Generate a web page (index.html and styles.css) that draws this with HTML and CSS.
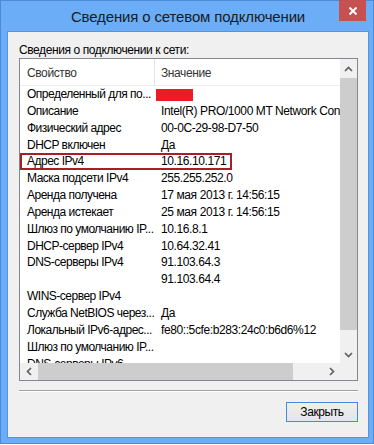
FILE: index.html
```html
<!DOCTYPE html>
<html lang="ru">
  <head>
    <meta charset="UTF-8" />
    <meta name="viewport" content="width=device-width, initial-scale=1.0" />
    <title>Сведения о сетевом подключении</title>
    <link rel="stylesheet" href="styles.css">
  </head>
  <body>
    <div class="window">
      <div class="titlebar">
        <span class="title">Сведения о сетевом подключении</span>
        <button class="close" aria-label="Закрыть">
          <svg width="10" height="8" viewBox="0 0 10 8"><path d="M1.5 0.5 L8.5 7.5 M8.5 0.5 L1.5 7.5" stroke="#fff" stroke-width="2" fill="none"/></svg>
        </button>
      </div>

      <div class="client">
        <div class="label">Сведения о подключении к сети:</div>

        <div class="listbox">
          <div class="view">
            <div class="header">
              <div class="hcol name">Свойство</div>
              <div class="hcol value">Значение</div>
            </div>
            <div class="row"><div class="name">Определенный для по...</div><div class="value"><span class="redact"></span></div></div>
            <div class="row"><div class="name">Описание</div><div class="value">Intel(R) PRO/1000 MT Network Connection</div></div>
            <div class="row"><div class="name">Физический адрес</div><div class="value">00-0C-29-98-D7-50</div></div>
            <div class="row"><div class="name">DHCP включен</div><div class="value">Да</div></div>
            <div class="row mark"><div class="name">Адрес IPv4</div><div class="value">10.16.10.171</div></div>
            <div class="row"><div class="name">Маска подсети IPv4</div><div class="value">255.255.252.0</div></div>
            <div class="row"><div class="name">Аренда получена</div><div class="value">17 мая 2013 г. 14:56:15</div></div>
            <div class="row"><div class="name">Аренда истекает</div><div class="value">25 мая 2013 г. 14:56:15</div></div>
            <div class="row"><div class="name">Шлюз по умолчанию IP...</div><div class="value">10.16.8.1</div></div>
            <div class="row"><div class="name">DHCP-сервер IPv4</div><div class="value">10.64.32.41</div></div>
            <div class="row"><div class="name">DNS-серверы IPv4</div><div class="value">91.103.64.3</div></div>
            <div class="row"><div class="name"></div><div class="value">91.103.64.4</div></div>
            <div class="row"><div class="name">WINS-сервер IPv4</div><div class="value"></div></div>
            <div class="row"><div class="name">Служба NetBIOS через...</div><div class="value">Да</div></div>
            <div class="row"><div class="name">Локальный IPv6-адрес...</div><div class="value">fe80::5cfe:b283:24c0:b6d6%12</div></div>
            <div class="row"><div class="name">Шлюз по умолчанию IP...</div><div class="value"></div></div>
            <div class="row"><div class="name">DNS-серверы IPv6</div><div class="value"></div></div>
          </div>

          <div class="vscroll">
            <div class="arrow up">
              <svg width="9" height="6" viewBox="0 0 9 6"><polyline points="1,5 4.5,1.5 8,5" stroke="#606060" stroke-width="1.7" fill="none"/></svg>
            </div>
            <div class="vthumb"></div>
            <div class="track"></div>
            <div class="arrow">
              <svg width="9" height="6" viewBox="0 0 9 6"><polyline points="1,1 4.5,4.5 8,1" stroke="#606060" stroke-width="1.7" fill="none"/></svg>
            </div>
          </div>

          <div class="hscroll">
            <div class="arrow">
              <svg width="6" height="9" viewBox="0 0 6 9"><polyline points="5,1 1.5,4.5 5,8" stroke="#606060" stroke-width="1.7" fill="none"/></svg>
            </div>
            <div class="hthumb"></div>
            <div class="track"></div>
            <div class="arrow">
              <svg width="6" height="9" viewBox="0 0 6 9"><polyline points="1,1 4.5,4.5 1,8" stroke="#606060" stroke-width="1.7" fill="none"/></svg>
            </div>
          </div>

          <div class="corner"></div>
        </div>

        <div class="sep"></div>

        <div class="actions">
          <button class="btn">Закрыть</button>
        </div>
      </div>
    </div>
  </body>
</html>
```

FILE: styles.css
```css
body {
  margin: 0;
  background: #fff;
  font-family: "Liberation Sans", Arial, sans-serif;
  font-size: 12px;
  letter-spacing: -0.4px;
}
.window {
  box-sizing: border-box;
  width: 374px;
  height: 444px;
  border: 1px solid #4a8ad8;
  background: #6badf6;
  padding: 0 4px 5px 6px;
  display: flex;
  flex-direction: column;
}
.titlebar {
  flex: none;
  height: 30px;
  position: relative;
  display: flex;
  align-items: center;
  justify-content: center;
}
.title {
  font-size: 15px;
  letter-spacing: -0.15px;
  color: #1b1b1b;
}
.close {
  position: absolute;
  top: -1px;
  right: 3px;
  width: 27px;
  height: 21px;
  padding: 0;
  border: 0;
  background: #c75050;
  display: flex;
  align-items: center;
  justify-content: center;
}
.client {
  flex: 1;
  border: 1px solid #5594e0;
  background: #f0f0f0;
  padding: 11px 10px 0 11px;
  display: flex;
  flex-direction: column;
}
.label {
  line-height: 15px;
  color: #000;
}
.listbox {
  flex: none;
  box-sizing: border-box;
  height: 323px;
  border: 1px solid #828790;
  background: #fff;
  display: grid;
  grid-template-columns: 1fr 17px;
  grid-template-rows: 1fr 17px;
}
.view {
  overflow: hidden;
  position: relative;
}
.header {
  display: flex;
  height: 26px;
  border-bottom: 1px solid #e8edf3;
  color: #333;
}
.hcol {
  padding-top: 2px;
  line-height: 24px;
  white-space: nowrap;
}
.name {
  flex: none;
  box-sizing: border-box;
  width: 135px;
  padding-left: 7px;
  overflow: hidden;
  white-space: nowrap;
}
.row .name {
  letter-spacing: -0.5px;
}
.hcol.name {
  border-right: 1px solid #e5e5e5;
}
.value {
  padding-left: 6px;
  white-space: nowrap;
}
.row {
  display: flex;
  height: 16.85px;
  line-height: 16.85px;
  color: #000;
}
.row.mark {
  position: relative;
}
.row.mark::after {
  content: "";
  position: absolute;
  left: 0;
  top: 0;
  width: 212px;
  height: 100%;
  box-sizing: border-box;
  border: 2px solid #a81e26;
}
.redact {
  display: inline-block;
  width: 37px;
  height: 12px;
  margin-left: -5px;
  vertical-align: middle;
  background: #ed1c24;
}
.vscroll,
.hscroll,
.corner {
  background: #f0f0f0;
}
.vscroll {
  display: flex;
  flex-direction: column;
}
.hscroll {
  display: flex;
}
.arrow {
  flex: none;
  width: 17px;
  height: 17px;
  display: flex;
  align-items: center;
  justify-content: center;
}
.vscroll .arrow {
  width: auto;
}
.arrow.up {
  box-sizing: border-box;
  padding-top: 3px;
}
.vthumb {
  flex: none;
  height: 252px;
  margin-top: 2px;
  background: #cdcdcd;
}
.hthumb {
  flex: none;
  width: 255px;
  margin-left: 1px;
  background: #cdcdcd;
}
.track {
  flex: 1;
}
.sep {
  margin-top: 9px;
  height: 1px;
  background: #a0a0a0;
  border-bottom: 1px solid #fff;
}
.actions {
  display: flex;
  justify-content: flex-end;
  margin-top: 10px;
}
.btn {
  box-sizing: border-box;
  width: 72px;
  height: 20px;
  padding: 0;
  border: 1px solid #3d8ee0;
  background: linear-gradient(#efefef, #e5e5e5);
  font-family: "Liberation Sans", Arial, sans-serif;
  font-size: 12px;
  letter-spacing: -0.4px;
  color: #000;
}
```
